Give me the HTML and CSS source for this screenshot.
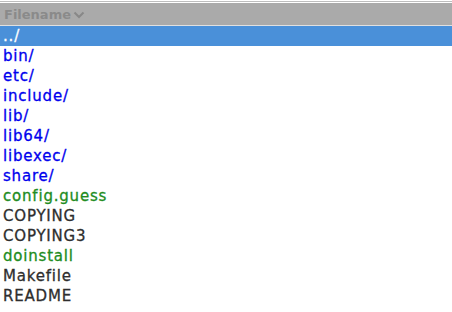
FILE: index.html
```html
<!DOCTYPE html>
<html lang="en">
<head>
  <meta charset="UTF-8">
  <title>Files</title>
  <link rel="stylesheet" href="styles.css">
</head>
<body>
  <div class="list">
    <div class="head">
      <span class="col">Filename
        <svg class="chev" width="12" height="8" viewBox="0 0 12 8"><path d="M1.5 1.5 L6 6 L10.5 1.5" fill="none" stroke="#888" stroke-width="2"/></svg>
      </span>
    </div>
    <div class="row sel">../</div>
    <div class="row dir">bin/</div>
    <div class="row dir">etc/</div>
    <div class="row dir">include/</div>
    <div class="row dir">lib/</div>
    <div class="row dir">lib64/</div>
    <div class="row dir">libexec/</div>
    <div class="row dir">share/</div>
    <div class="row exe">config.guess</div>
    <div class="row">COPYING</div>
    <div class="row">COPYING3</div>
    <div class="row exe">doinstall</div>
    <div class="row">Makefile</div>
    <div class="row">README</div>
  </div>
</body>
</html>
```

FILE: styles.css
```css
body { margin: 0; background: #fff; font-family: "DejaVu Sans", sans-serif; font-size: 13px; }
.list { padding-top: 1px; }
.head { border-top: 1px solid #bdbdbd; border-bottom: 1px solid #e0e0e0; background: #aaaaaa; display: flex; align-items: center; padding-left: 4px; box-shadow: inset 0 1px 0 #fff; box-sizing: border-box; height: 25px; }
.col { color: #8a8a8a; font-weight: bold; display: flex; align-items: center; gap: 2px; margin-top: 1px; }
.chev { margin-top: 1px; }
.row { height: 20px; line-height: 21px; padding-left: 3px; color: #2e2e2e; font-size: 15px; letter-spacing: 0.8px; -webkit-text-stroke: 0.3px currentColor; }
.row.sel { background: #4a90d9; color: #fff; }
.row.dir { color: #0000ee; }
.row.exe { color: #218c21; }
```
